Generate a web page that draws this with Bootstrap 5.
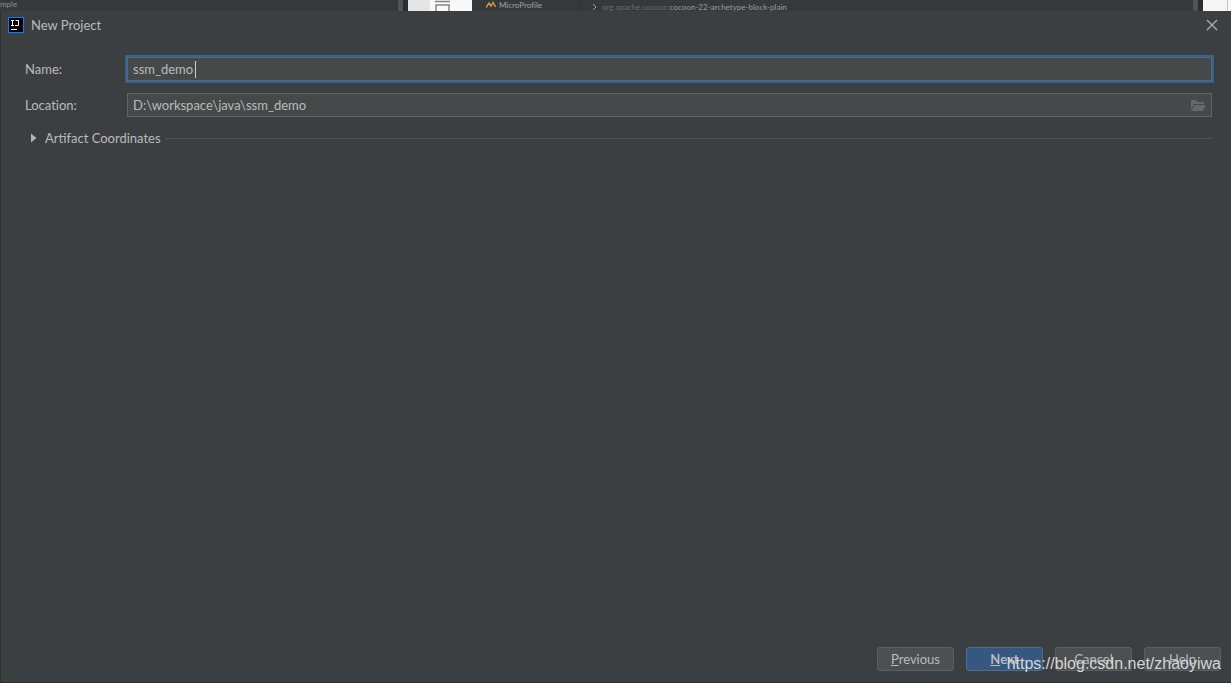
<!DOCTYPE html>
<html lang="en">
<head>
<meta charset="utf-8">
<meta name="viewport" content="width=device-width, initial-scale=1">
<title>New Project</title>
<link href="https://cdn.jsdelivr.net/npm/bootstrap@5.3.0/dist/css/bootstrap.min.css" rel="stylesheet">
<style>
  body { background: #2b2b2b; color: #bbb; font: 13px/20px Lato, "Noto Sans", sans-serif; font-variant-ligatures: none; }
  /* Sliver of the IDE window behind the dialog */
  .backdrop-strip { height: 11px; background: #36393b; font-size: 8px; line-height: 8px; color: #8d8f90; white-space: nowrap; }
  .strip-left { flex: 0 0 398px; }
  .strip-bar { flex: 0 0 5px; background: #505254; }
  .strip-gap { flex: 0 0 5px; background: #2b2d2f; }
  .strip-page { flex: 0 0 64px; background: linear-gradient(90deg, #e6e6e6 22px, #f8f8f8 22px); }
  .strip-libs { flex: 0 0 108px; padding: 1px 0 0 14px; gap: 3px; border-right: 1px solid #303335; color: #a0a2a3; }
  .strip-tree { padding: 3px 0 0 10px; }
  .strip-tree .group-id { color: #686b6d; }
  .strip-tree .artifact-id { color: #9a9c9d; }
  .strip-edge { flex: 0 0 28px; background: linear-gradient(90deg, #f6f6f6 24px, #c9c9c9 24px, #c9c9c9 25px, #f6f6f6 25px); }

  .dialog-window { background: #3c3f41; border-left: 1px solid #2e3032; border-bottom: 1px solid #292b2d; }
  .title-row { height: 28px; padding: 0 12px 0 7px; gap: 7px; }
  .close-btn { width: 14px; height: 20px; background: none; color: #b0b2b3; }
  .form-area { padding: 17px 19px 0 24px; }
  .form-area label { flex: 0 0 102px; }
  .field-row { height: 26px; }
  .field-box { background: #45494a; border: 1px solid #646464; height: 24px; padding: 0 5px; }
  .field-box.active { border-color: #466d94; box-shadow: 0 0 0 2px #3d6185; }
  .field-box input { background: none; color: #bbb; border: 0; outline: 0; padding: 0; height: 20px; }
  .field-box .name-input { width: 62px; }
  .text-caret { width: 1px; height: 17px; background: #ccc; }
  .folder-btn { background: none; height: 16px; }
  .coords-btn { background: none; color: #bbb; gap: 8px; }
  .coords-line { height: 1px; background: #515354; }

  .footer-row { gap: 12px; padding: 0 10px 11px; }
  .dlg-btn { width: 77px; height: 24px; border: 1px solid #5e6060; border-radius: 3px; background: #4c5052; color: #bbb; }
  .dlg-btn.default-btn { background: #365880; border-color: #4c708c; font-weight: 700; }
  .watermark { right: 10px; bottom: 9px; color: #d5d6d6; font: 16px/20px "Liberation Sans", Arial, sans-serif; pointer-events: none; }
</style>
</head>
<body class="min-vh-100 d-flex flex-column position-relative">
  <div class="backdrop-strip d-flex overflow-hidden">
    <div class="strip-left">mple</div>
    <div class="strip-bar"></div><div class="strip-gap"></div>
    <div class="strip-page">
      <svg class="d-block ms-4" width="20" height="11" viewBox="0 0 20 11" fill="none" stroke="#858585" stroke-width="1.500"><path d="M3 1.500H18M4 11V5H17V11"/></svg>
    </div>
    <div class="strip-libs d-flex">
      <svg width="10" height="8" viewBox="0 0 10 8" fill="none" stroke="#d39a35" stroke-width="1.500"><path d="M0 6.500L3 2L5 5L7 1.500L9.500 6"/></svg>
      <span>MicroProfile</span>
    </div>
    <div class="strip-tree d-flex flex-grow-1">
      <svg class="me-1" width="8" height="8" viewBox="0 0 8 8" fill="none" stroke="#a0a2a3"><path d="M3 1L6 4L3 7"/></svg>
      <span class="group-id">org.apache.cocoon:</span><span class="artifact-id">cocoon-22-archetype-block-plain</span>
    </div>
    <div class="strip-bar"></div><div class="strip-gap"></div>
    <div class="strip-edge"></div>
  </div>

  <main class="dialog-window flex-grow-1 d-flex flex-column">
    <header class="title-row d-flex align-items-center">
      <svg width="16" height="16" viewBox="0 0 16 16"><path fill="#087cfa" d="M0 0H16V16H0z"/><path fill="#000" d="M1 1H15V15H1z"/><path fill="none" stroke="#fff" d="M3 3.500H6M4.500 3V8M3 8.500H6M7.500 3.500H11M10.500 3V8.500H7M3 12.500H9"/></svg>
      <span>New Project</span>
      <button type="button" class="close-btn border-0 p-0 ms-auto d-flex align-items-center justify-content-center" aria-label="Close">
        <svg width="12" height="12" viewBox="0 0 12 12" fill="none" stroke="currentColor" stroke-width="1.200"><path d="M1 1L11 11M11 1L1 11"/></svg>
      </button>
    </header>

    <form class="form-area flex-grow-1 d-flex flex-column">
      <div class="field-row d-flex align-items-center">
        <label for="name">Name:</label>
        <div class="field-box active d-flex align-items-center flex-grow-1">
          <input class="name-input" id="name" type="text" value="ssm_demo">
          <span class="text-caret"></span>
        </div>
      </div>
      <div class="field-row d-flex align-items-center mt-2 mb-2 pt-1">
        <label for="location">Location:</label>
        <div class="field-box d-flex align-items-center flex-grow-1">
          <input class="flex-grow-1" id="location" type="text" value="D:\workspace\java\ssm_demo">
          <button type="button" class="folder-btn border-0 p-0 d-flex align-items-center" aria-label="Browse">
            <svg width="15" height="11" viewBox="0 0 15 11" fill="#626a6e"><path d="M0 0H5L6 2H13V4H3L0 10z"/><path d="M3.500 5H15L12 11H.500z"/></svg>
          </button>
        </div>
      </div>
      <div class="d-flex align-items-center pt-1">
        <button type="button" class="coords-btn border-0 py-0 ps-1 pe-1 d-flex align-items-center" aria-expanded="false">
          <svg width="8" height="10" viewBox="0 0 8 10" fill="#b3b5b6"><path d="M2 .500L7.500 5L2 9.500z"/></svg>
          Artifact Coordinates
        </button>
        <div class="coords-line flex-grow-1"></div>
      </div>
    </form>

    <footer class="footer-row d-flex justify-content-end">
      <button type="button" class="dlg-btn p-0"><u>P</u>revious</button>
      <button type="button" class="dlg-btn default-btn p-0"><u>N</u>ext</button>
      <button type="button" class="dlg-btn p-0">Cancel</button>
      <button type="button" class="dlg-btn p-0">Help</button>
    </footer>
  </main>
  <div class="watermark position-absolute">https://blog.csdn.net/zhaoyiwa</div>
<script src="https://cdn.jsdelivr.net/npm/bootstrap@5.3.0/dist/js/bootstrap.bundle.min.js"></script>
</body>
</html>
